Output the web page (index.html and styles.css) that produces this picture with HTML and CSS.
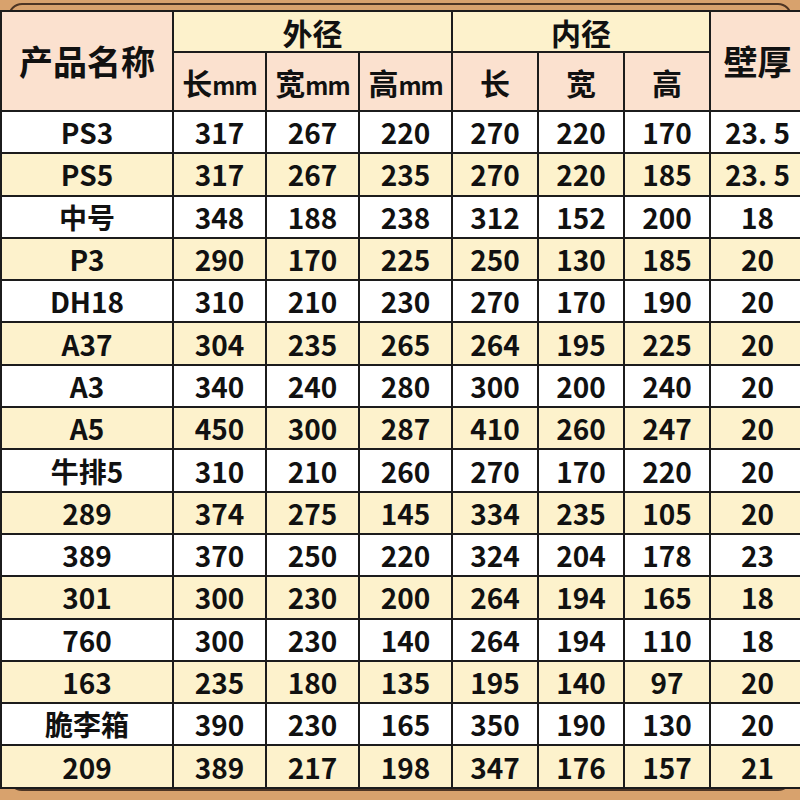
FILE: index.html
```html
<!DOCTYPE html>
<html lang="zh">
<head>
<meta charset="utf-8">
<title>尺寸表</title>
<link rel="stylesheet" href="styles.css">
</head>
<body>
<div class="frame">
  <div class="card">
    <table class="sizes">
      <colgroup>
        <col class="c-name">
        <col class="c-out"><col class="c-out"><col class="c-out">
        <col class="c-in"><col class="c-in"><col class="c-in">
        <col class="c-wall">
      </colgroup>
      <thead>
        <tr class="h1">
          <th rowspan="2" class="peach big">产品名称</th>
          <th colspan="3" class="cream">外径</th>
          <th colspan="3" class="cream">内径</th>
          <th rowspan="2" class="peach big">壁厚</th>
        </tr>
        <tr class="h2">
          <th class="peach">长<span class="mm">mm</span></th>
          <th class="peach">宽<span class="mm">mm</span></th>
          <th class="peach">高<span class="mm">mm</span></th>
          <th class="peach">长</th>
          <th class="peach">宽</th>
          <th class="peach">高</th>
        </tr>
      </thead>
      <tbody>
        <tr><td>PS3</td><td>317</td><td>267</td><td>220</td><td>270</td><td>220</td><td>170</td><td>23. 5</td></tr>
        <tr><td>PS5</td><td>317</td><td>267</td><td>235</td><td>270</td><td>220</td><td>185</td><td>23. 5</td></tr>
        <tr><td>中号</td><td>348</td><td>188</td><td>238</td><td>312</td><td>152</td><td>200</td><td>18</td></tr>
        <tr><td>P3</td><td>290</td><td>170</td><td>225</td><td>250</td><td>130</td><td>185</td><td>20</td></tr>
        <tr><td>DH18</td><td>310</td><td>210</td><td>230</td><td>270</td><td>170</td><td>190</td><td>20</td></tr>
        <tr><td>A37</td><td>304</td><td>235</td><td>265</td><td>264</td><td>195</td><td>225</td><td>20</td></tr>
        <tr><td>A3</td><td>340</td><td>240</td><td>280</td><td>300</td><td>200</td><td>240</td><td>20</td></tr>
        <tr><td>A5</td><td>450</td><td>300</td><td>287</td><td>410</td><td>260</td><td>247</td><td>20</td></tr>
        <tr><td>牛排5</td><td>310</td><td>210</td><td>260</td><td>270</td><td>170</td><td>220</td><td>20</td></tr>
        <tr><td>289</td><td>374</td><td>275</td><td>145</td><td>334</td><td>235</td><td>105</td><td>20</td></tr>
        <tr><td>389</td><td>370</td><td>250</td><td>220</td><td>324</td><td>204</td><td>178</td><td>23</td></tr>
        <tr><td>301</td><td>300</td><td>230</td><td>200</td><td>264</td><td>194</td><td>165</td><td>18</td></tr>
        <tr><td>760</td><td>300</td><td>230</td><td>140</td><td>264</td><td>194</td><td>110</td><td>18</td></tr>
        <tr><td>163</td><td>235</td><td>180</td><td>135</td><td>195</td><td>140</td><td>97</td><td>20</td></tr>
        <tr><td>脆李箱</td><td>390</td><td>230</td><td>165</td><td>350</td><td>190</td><td>130</td><td>20</td></tr>
        <tr><td>209</td><td>389</td><td>217</td><td>198</td><td>347</td><td>176</td><td>157</td><td>21</td></tr>
      </tbody>
    </table>
  </div>
</div>
</body>
</html>
```

FILE: styles.css
```css
html, body {
  margin: 0;
  padding: 0;
  background: #d8a26d;
  width: 800px;
  height: 800px;
  overflow: hidden;
}

.frame {
  padding: 3px 8px 0 8px;
}

.card {
  border: 2px solid #4d3524;
  border-radius: 14px;
  height: 788px;
  box-sizing: border-box;
}

.sizes {
  margin: 5px -12px 0 -10px;
  width: 804px;
  table-layout: fixed;
  border-collapse: collapse;
  font-family: "Noto Sans CJK SC", "Noto Sans", sans-serif;
  font-weight: 700;
  color: #111;
}

.c-name { width: 172px; }
.c-out { width: 93px; }
.c-in { width: 86px; }
.c-wall { width: 95px; }

.sizes th,
.sizes td {
  border: 2px solid #1c1c1c;
  text-align: center;
  padding: 0;
  line-height: 1;
  white-space: nowrap;
}

.sizes th {
  font-size: 30px;
  font-weight: 700;
}

.sizes th.big {
  font-size: 34px;
}

.h1 { height: 41px; }
.h2 { height: 59px; }

.peach { background: #fbe1cf; }
.cream { background: #fdf2cc; }

.mm {
  font-size: 24px;
  letter-spacing: -1px;
}

.sizes tbody tr { height: 42.3px; }

.sizes td {
  font-size: 28px;
}

.sizes tbody tr:nth-child(odd) td { background: #ffffff; }
.sizes tbody tr:nth-child(even) td { background: #fdf2cc; }
```
